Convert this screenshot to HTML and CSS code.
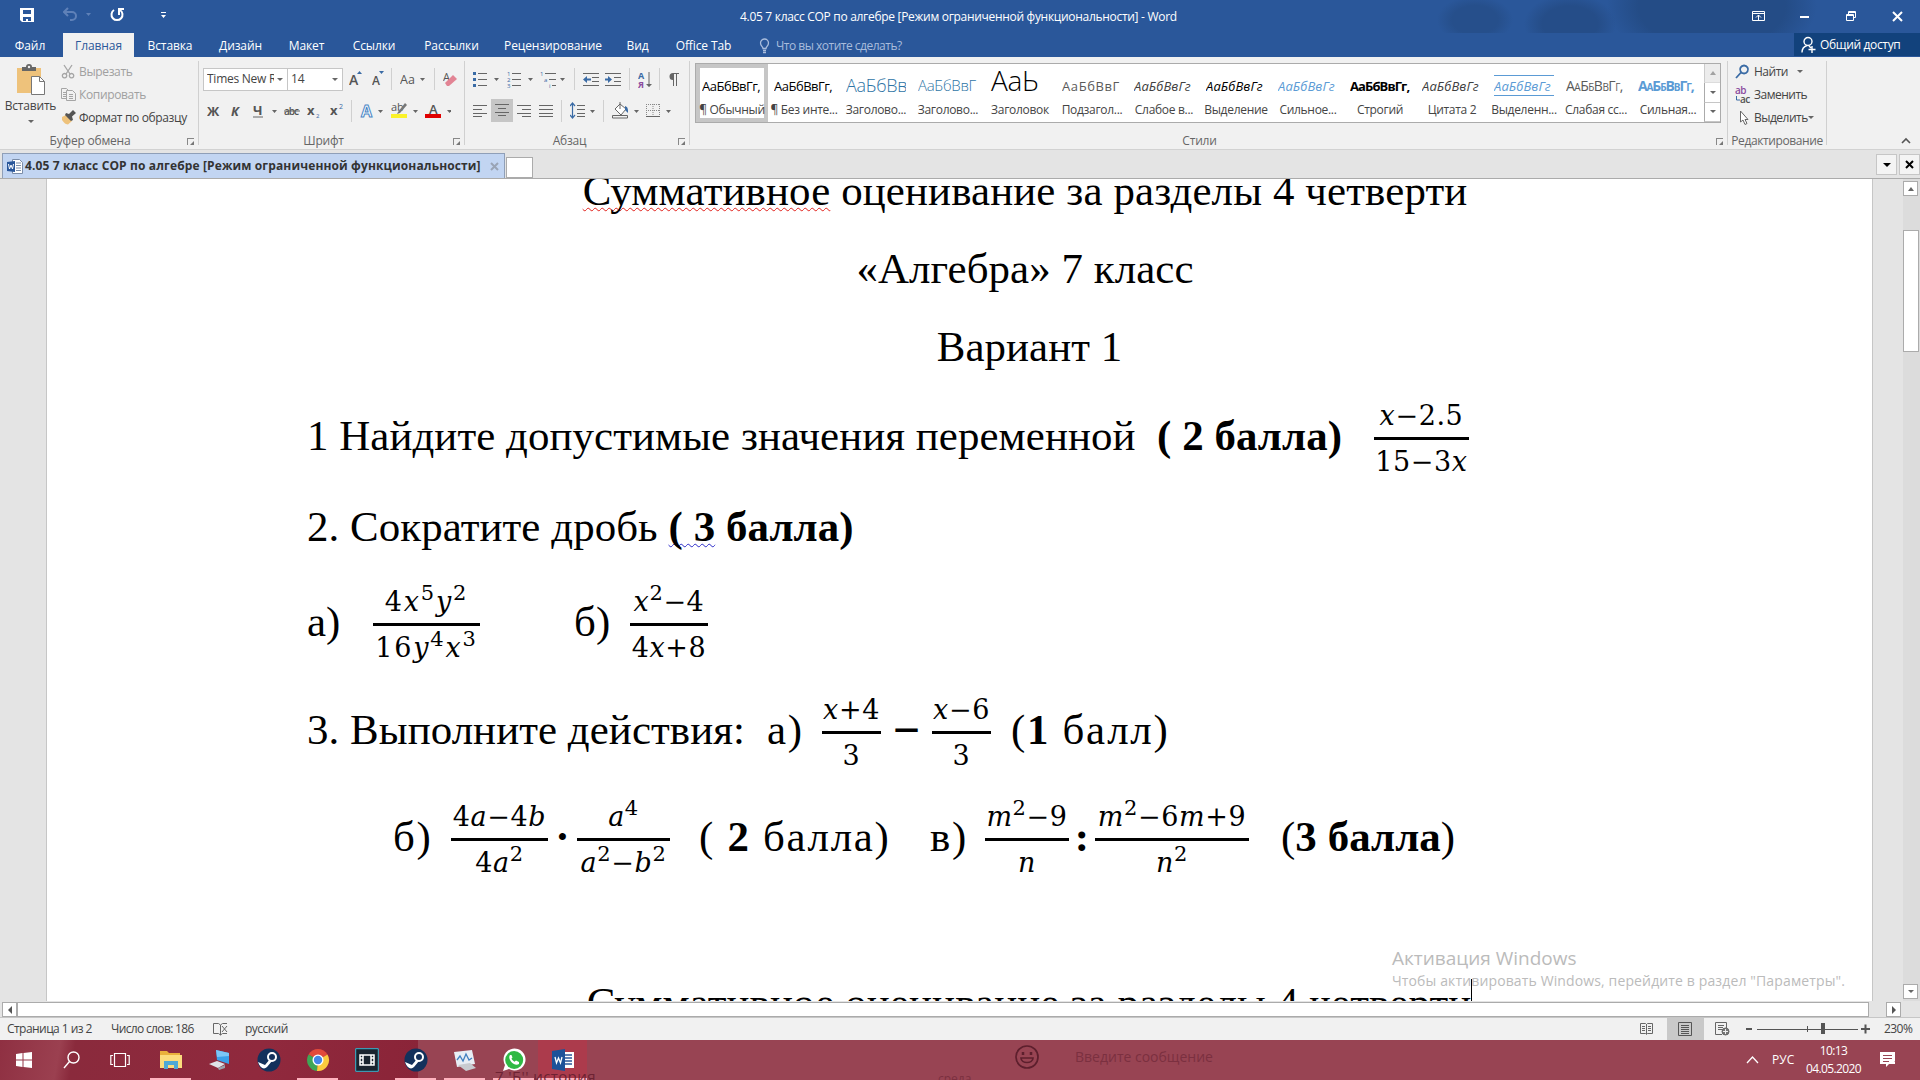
FILE: index.html
```html
<!DOCTYPE html>
<html lang="ru">
<head>
  <meta charset="UTF-8">
  <title>4.05 7 класс СОР по алгебре - Word</title>
  <link rel="stylesheet" href="styles.css">
</head>
<body>
  <!-- title bar -->
  <header class="titlebar">
    <div class="quick">
      <svg width="43" height="16" viewBox="0 0 43 16"><path d="M0 1h14v14H2l-2-2z" fill="#fff"/><path d="M3 3h8v4H3zM3 10h8v4H8v-2H6v2H3z" fill="#2a579a"/></svg>
      <svg width="47" height="16" viewBox="0 0 47 16"><path d="M5 1L1 5l4 4M1 5h8a4 4 0 0 1 0 8H7" fill="none" stroke="#5f81b8" stroke-width="2"/><path d="M23 6h5l-2.500 3z" fill="#5f81b8"/></svg>
      <svg width="50" height="16" viewBox="0 0 50 16"><path d="M4 3a5.500 5.500 0 1 0 6 0M9 8V2h5" fill="none" stroke="#fff" stroke-width="2"/></svg>
      <svg width="8" height="16" viewBox="0 0 8 16"><path d="M1 5h5v1H1zM1 8h5L3.500 11z" fill="#fff"/></svg>
    </div>
    <div class="title">4.05 7 класс СОР по алгебре [Режим ограниченной функциональности] - Word</div>
    <div class="window-buttons">
      <svg width="48" height="14" viewBox="0 0 48 14" fill="none" stroke="#fff"><path d="M.5 1.500h12v9H.5zM.5 3.500h12M6.500 10V5M4 7.500L6.500 5 9 7.500"/></svg>
      <svg width="46" height="14" viewBox="0 0 46 14"><path d="M0 6h9v2H0z" fill="#fff"/></svg>
      <svg width="46" height="14" viewBox="0 0 46 14" fill="none" stroke="#fff"><path d="M.5 4.500h7v6h-7zM.5 5.500h7M2.500 4V1.500h7v6H8M2.500 2.500h7"/></svg>
      <svg width="11" height="14" viewBox="0 0 11 14"><path d="M1 2l9 9M10 2l-9 9" stroke="#fff" stroke-width="2"/></svg>
    </div>
  </header>

  <nav class="tabs">
    <a>Файл</a>
    <a class="active">Главная</a>
    <a>Вставка</a>
    <a>Дизайн</a>
    <a>Макет</a>
    <a>Ссылки</a>
    <a>Рассылки</a>
    <a>Рецензирование</a>
    <a>Вид</a>
    <a>Office Tab</a>
    <div class="tell-me">
      <svg width="17" height="16" viewBox="0 0 17 16" fill="none" stroke="#a9bddd"><path d="M4 10.500C4 8.500 1.500 8 1.500 5a4 4 0 0 1 8 0c0 3-2.500 3.500-2.500 5.500zM4 12.500h3M4 14.500h3" stroke-width="1.300"/></svg>
      <span>Что вы хотите сделать?</span>
    </div>
    <div class="share">
      <svg width="19" height="18" viewBox="0 0 19 18" fill="none" stroke="#fff" stroke-width="1.400"><circle cx="7" cy="5.500" r="4"/><path d="M1 16.500c0-4 2-6 5-7M8 10l2 2M11 10v7M7.500 13.500h7"/></svg>
      <span>Общий доступ</span>
    </div>
  </nav>

  <!-- ribbon -->
  <section class="ribbon">
    <div class="group clipboard">
      <div class="group-body">
        <div class="paste">
          <svg width="30" height="32" viewBox="0 0 30 32"><path d="M1 4h24v25H1z" fill="#eec27b"/><path d="M6 3h4a3 3 0 0 1 6 0h4v4H6z" fill="#666"/><circle cx="13" cy="3" r="1.200" fill="#f1f1f1"/><path d="M15.500 12.500h8l5 5v13h-13z" fill="#fff" stroke="#777"/><path d="M23.500 12.500v5h5" fill="none" stroke="#777"/></svg>
          <span>Вставить</span>
          <i class="caret"></i>
        </div>
        <ul class="commands">
          <li class="disabled"><svg width="18" height="15" viewBox="0 0 18 15"><path d="M3 1l6 9M11 1L5 10" fill="none" stroke="#a5a5a5" stroke-width="1.300"/><path d="M3.500 9.500a2.200 2.200 0 1 0 .1 0zM10.500 9.500a2.200 2.200 0 1 0 .1 0z" fill="none" stroke="#a5a5a5" stroke-width="1.300"/></svg><span>Вырезать</span></li>
          <li class="disabled"><svg width="18" height="15" viewBox="0 0 18 15"><g fill="#f1f1f1" stroke="#a5a5a5"><path d="M.5 1.500h5l3 3v7h-8zM2 5.500h4M2 7.500h4M2 9.500h4"/><path d="M5.500 3.500h6l3 3v7h-9zM8 7.500h4M8 9.500h4M8 11.500h4"/></g></svg><span>Копировать</span></li>
          <li><svg width="18" height="15" viewBox="0 0 18 15"><path d="M1 7l4-2 6 6-4 3.500c-3 0-5-3-6-4.500z" fill="#eec27b"/><path d="M5 3l3 1 4-4 3 3-4 3.500 1 3.500-2 1-6-6z" fill="#555"/></svg><span>Формат по образцу</span></li>
        </ul>
      </div>
      <div class="group-label">Буфер обмена<i class="launcher"></i></div>
    </div>

    <div class="group font">
      <div class="tools">
        <div class="combo name"><span>Times New R</span><i class="caret"></i></div>
        <div class="combo size"><span>14</span><i class="caret"></i></div>
        <svg width="23" height="24" viewBox="0 0 23 24"><text x="0" y="18" font-size="14" font-weight="600">A</text><path d="M8 7h5l-2.500-3z" fill="#3a6ba5"/></svg>
        <svg width="19" height="24" viewBox="0 0 19 24"><text x="0" y="18" font-size="12" font-weight="600">A</text><path d="M7 4h5L9.500 7z" fill="#3a6ba5"/></svg>
        <i class="sep"></i>
        <svg width="34" height="24" viewBox="0 0 34 24"><text x="0" y="17" font-size="12.500">Aa</text><path d="M20 11h5l-2.500 3z"/></svg>
        <i class="sep"></i>
        <svg width="20" height="24" viewBox="0 0 20 24"><text x="0" y="14" font-size="11">A</text><path d="M2 16l8-8 4 4-8 7H4z" fill="#e28494"/></svg>
      </div>
      <div class="tools">
        <svg width="24" height="22" viewBox="0 0 24 22"><text x="0" y="16" font-size="13" font-weight="bold">Ж</text></svg>
        <svg width="22" height="22" viewBox="0 0 22 22"><text x="0" y="16" font-size="13" font-weight="bold" font-style="italic">К</text></svg>
        <svg width="31" height="22" viewBox="0 0 31 22"><text x="0" y="15" font-size="13" font-weight="bold">Ч</text><path d="M0 16.500h10v1H0zM19 10h5l-2.500 3z"/></svg>
        <svg width="23" height="22" viewBox="0 0 23 22"><text x="0" y="15" font-size="10" textLength="15" font-weight="600">abc</text><path d="M0 10.500h16v1H0z"/></svg>
        <svg width="23" height="22" viewBox="0 0 23 22"><text x="0" y="15" font-size="13" font-weight="bold">x</text><text x="9" y="18" font-size="6" class="blue">2</text></svg>
        <svg width="21" height="22" viewBox="0 0 21 22"><text x="0" y="15" font-size="13" font-weight="bold">x</text><text x="9" y="9" font-size="7" class="blue">2</text></svg>
        <i class="sep"></i>
        <svg width="31" height="22" viewBox="0 0 31 22"><text x="1" y="17" font-size="16" font-weight="bold" class="outline">A</text><path d="M18 10h5l-2.500 3z"/></svg>
        <svg width="34" height="22" viewBox="0 0 34 22"><text x="0" y="11" font-size="11">ab</text><path d="M7 12l7-9 2 2-7 8-3 1z" fill="#777"/><path d="M0 14h16v4H0z" fill="#fbf22a"/><path d="M22 10h5l-2.500 3z"/></svg>
        <svg width="26" height="22" viewBox="0 0 26 22"><text x="4" y="14" font-size="13" font-weight="600">A</text><path d="M0 14h16v4H0z" fill="#e00000"/><path d="M22 10h5l-2.500 3z"/></svg>
      </div>
      <div class="group-label">Шрифт<i class="launcher"></i></div>
    </div>

    <div class="group paragraph">
      <div class="tools">
        <svg width="34" height="24" viewBox="0 0 34 24"><path d="M5 6h9v1H5zM5 12h9v1H5zM5 18h9v1H5zM21 11h5l-2.500 3z"/><path d="M0 5h3v3H0zM0 11h3v3H0zM0 17h3v3H0z" fill="#3a6ba5"/></svg>
        <svg width="33" height="24" viewBox="0 0 33 24"><path d="M5 6h9v1H5zM5 12h9v1H5zM5 18h9v1H5zM21 11h5l-2.500 3z"/><text x="0" y="9" font-size="6" class="blue">1</text><text x="0" y="15" font-size="6" class="blue">2</text><text x="0" y="21" font-size="6" class="blue">3</text></svg>
        <svg width="34" height="24" viewBox="0 0 34 24"><path d="M5 6h11v1H5zM9 12h7v1H9zM12 18h4v1h-4zM20 11h5l-2.500 3z"/><text x="0" y="9" font-size="6" class="blue">1</text><text x="4" y="15" font-size="6" class="blue">a</text><text x="9" y="21" font-size="6" class="blue">i</text></svg>
        <i class="sep"></i>
        <svg width="22" height="24" viewBox="0 0 22 24"><path d="M0 6h16v1H0zM9 10h7v1H9zM9 14h7v1H9zM0 18h16v1H0z"/><path d="M0 12.500L4 9v2.500h4v2H4V16z" fill="#3a6ba5"/></svg>
        <svg width="24" height="24" viewBox="0 0 24 24"><path d="M0 6h16v1H0zM9 10h7v1H9zM9 14h7v1H9zM0 18h16v1H0z"/><path d="M7 12.500L3 9v2.500H0v2h3V16z" fill="#3a6ba5"/></svg>
        <i class="sep"></i>
        <svg width="21" height="24" viewBox="0 0 21 24"><text x="0" y="12" font-size="9" font-weight="bold" class="blue">А</text><text x="0" y="21" font-size="9" font-weight="bold" class="purple">Я</text><path d="M10.500 5h1v15h-1zM8 17h6l-3 3z"/></svg>
        <i class="sep"></i>
        <svg width="16" height="24" viewBox="0 0 16 24"><path d="M5 6h6v1H9v12H8V7H6v12H5v-6a3.500 3.500 0 0 1 0-7z"/></svg>
      </div>
      <div class="tools">
        <svg width="18" height="22" viewBox="0 0 18 22"><path d="M0 5h14v1H0zM0 9h9v1H0zM0 13h14v1H0zM0 16h9v1H0z"/></svg>
        <svg class="pressed" width="22" height="23" viewBox="0 0 22 23"><path d="M4 5h14v1H4zM7 9h8v1H7zM4 13h14v1H4zM7 16h8v1H7z"/></svg>
        <svg width="22" height="22" viewBox="-4 0 22 22"><path d="M0 5h14v1H0zM5 9h9v1H5zM0 13h14v1H0zM5 16h9v1H5z"/></svg>
        <svg width="26" height="22" viewBox="-4 0 26 22"><path d="M0 5h14v1H0zM0 9h14v1H0zM0 13h14v1H0zM0 16h14v1H0z"/></svg>
        <i class="sep"></i>
        <svg width="33" height="22" viewBox="0 0 33 22"><path d="M7 5h8v1H7zM7 9h8v1H7zM7 13h8v1H7zM7 16h8v1H7zM20 10h5l-2.500 3z"/><path d="M2.500 3v15M0 6l2.500-3L5 6M0 15l2.500 3L5 15" fill="none" stroke="#3a6ba5" stroke-width="1.200"/></svg>
        <i class="sep"></i>
        <svg width="34" height="22" viewBox="0 0 34 22"><path d="M3 9l5-5 6 5-5 6zM8 9V2" fill="#fff" stroke="#666"/><path d="M13 6c3 1 3 3 3 7l-3-3z" fill="#3a6ba5"/><path d="M.5 15.500h15v2.500H.5z" fill="none" stroke="#666"/><path d="M22 10h5l-2.500 3z"/></svg>
        <svg width="28" height="22" viewBox="0 0 28 22"><path d="M.5 4v13M7 4v13M13.500 4v13M0 4.500h14M0 10.500h14" fill="none" stroke="#888" stroke-dasharray="1 1"/><path d="M0 16h14v1H0zM20 10h5l-2.500 3z"/></svg>
      </div>
      <div class="group-label">Абзац<i class="launcher"></i></div>
    </div>

    <div class="group styles">
      <div class="gallery">
        <div class="style selected"><b class="s-normal">АаБбВвГг,</b><span>¶ Обычный</span></div>
        <div class="style"><b class="s-normal">АаБбВвГг,</b><span>¶ Без инте...</span></div>
        <div class="style"><b class="s-h1">АаБбВв</b><span>Заголово...</span></div>
        <div class="style"><b class="s-h2">АаБбВвГ</b><span>Заголово...</span></div>
        <div class="style"><b class="s-title">АаЬ</b><span>Заголовок</span></div>
        <div class="style"><b class="s-sub">АаБбВвГ</b><span>Подзагол...</span></div>
        <div class="style"><b class="s-em weak">АаБбВвГг</b><span>Слабое в...</span></div>
        <div class="style"><b class="s-em">АаБбВвГг</b><span>Выделение</span></div>
        <div class="style"><b class="s-em accent">АаБбВвГг</b><span>Сильное...</span></div>
        <div class="style"><b class="s-strong">АаБбВвГг,</b><span>Строгий</span></div>
        <div class="style"><b class="s-em weak">АаБбВвГг</b><span>Цитата 2</span></div>
        <div class="style"><b class="s-em accent lined">АаБбВвГг</b><span>Выделенн...</span></div>
        <div class="style"><b class="s-caps">АаБбВвГг,</b><span>Слабая сс...</span></div>
        <div class="style"><b class="s-caps accent bold">АаБбВвГг,</b><span>Сильная...</span></div>
        <div class="gallery-scroll">
          <div class="off"><i class="caret up"></i></div>
          <div><i class="caret"></i></div>
          <div><i class="caret more"></i></div>
        </div>
      </div>
      <div class="group-label">Стили<i class="launcher"></i></div>
    </div>

    <div class="group editing">
      <ul class="commands">
        <li><svg width="19" height="16" viewBox="0 0 19 16"><path d="M9 1.500a4 4 0 1 0 .1 0zM6 8.500L1 14" fill="none" stroke="#3a6ba5" stroke-width="1.800"/></svg><span>Найти</span><i class="caret"></i></li>
        <li><svg width="19" height="18" viewBox="0 0 19 18"><text x="0" y="8" font-size="10" font-weight="600" class="purple">ab</text><text x="5" y="17" font-size="10" font-weight="600">ac</text><path d="M1.500 10v4H5" fill="none" stroke="#3a6ba5"/></svg><span>Заменить</span></li>
        <li><svg width="19" height="16" viewBox="0 0 19 16"><path d="M5.500 1v11l2.500-2 2 4.500 2-1-2-4h3z" fill="#fff" stroke="#666"/></svg><span>Выделить</span><i class="caret near"></i></li>
      </ul>
      <div class="group-label">Редактирование</div>
    </div>
    <svg class="collapse" width="10" height="8" viewBox="0 0 10 8"><path d="M1 6l4-4 4 4" fill="none" stroke="#555" stroke-width="1.600"/></svg>
  </section>

  <!-- document tabs -->
  <div class="doc-tabs">
    <div class="doc-tab">
      <svg width="18" height="17" viewBox="0 0 18 17"><path d="M5.500 1.500h7l3 3v11h-10z" fill="#fff" stroke="#7b8da8"/><path d="M9 5h5M9 7.500h5M9 10h5M9 12.500h5" stroke="#7b8da8"/><path d="M0 4l8-1v11l-8-1z" fill="#2a579a"/><path d="M1.500 6l1 5 1.500-4 1.500 4 1-5" fill="none" stroke="#fff"/></svg>
      <span>4.05 7 класс СОР по алгебре [Режим ограниченной функциональности]</span>
      <svg width="9" height="9" viewBox="0 0 9 9"><path d="M1 1l7 7M8 1L1 8" stroke="#9aa4b5" stroke-width="2"/></svg>
    </div>
    <div class="new-tab"></div>
    <div class="doc-tab-buttons">
      <div><i class="caret"></i></div>
      <div><svg width="9" height="9" viewBox="0 0 9 9"><path d="M1 1l7 7M8 1L1 8" stroke="#000" stroke-width="2"/></svg></div>
    </div>
  </div>

  <!-- document -->
  <main class="workspace">
    <article class="page">
      <p class="center first"><span class="typo">Суммативное</span> оценивание за разделы 4 четверти</p>
      <p class="center">«Алгебра» 7 класс</p>
      <p class="center variant">Вариант 1</p>

      <div class="line task1">
        <span>1 Найдите допустимые значения переменной</span>
        <span><b>( 2 балла)</b></span>
        <div class="frac"><span><i>x</i>−2.5</span><span>15−3<i>x</i></span></div>
      </div>
      <div class="line task2">
        <span>2. Сократите дробь <b><u class="grammar">( 3</u> балла)</b></span>
      </div>
      <div class="line task2-items">
        <span>а)</span>
        <div class="frac loose"><span>4<i>x</i><sup>5</sup><i>y</i><sup>2</sup></span><span>16<i>y</i><sup>4</sup><i>x</i><sup>3</sup></span></div>
        <span class="item-b">б)</span>
        <div class="frac"><span><i>x</i><sup>2</sup>−4</span><span>4<i>x</i>+8</span></div>
      </div>
      <div class="line task3">
        <span>3. Выполните действия:</span>
        <span class="math">а)</span>
        <div class="frac"><span><i>x</i>+4</span><span>3</span></div>
        <span class="op minus">−</span>
        <div class="frac"><span><i>x</i>−6</span><span>3</span></div>
        <span class="math points-a">(<b>1</b> балл)</span>
      </div>
      <div class="line task3-more">
        <span class="math">б)</span>
        <div class="frac"><span>4<i>a</i>−4<i>b</i></span><span>4<i>a</i><sup>2</sup></span></div>
        <span class="op">·</span>
        <div class="frac"><span><i>a</i><sup>4</sup></span><span><i>a</i><sup>2</sup>−<i>b</i><sup>2</sup></span></div>
        <span class="math points-b">( <b>2</b> балла)</span>
        <span class="math">в)</span>
        <div class="frac"><span><i>m</i><sup>2</sup>−9</span><span><i>n</i></span></div>
        <span class="op">:</span>
        <div class="frac"><span><i>m</i><sup>2</sup>−6<i>m</i>+9</span><span><i>n</i><sup>2</sup></span></div>
        <span class="points-c">(<b>3 балла</b>)</span>
      </div>
      <p class="center second">Суммативное оценивание за разделы 4 четверти<i class="cursor"></i></p>
      <div class="watermark">
        <div>Активация Windows</div>
        <small>Чтобы активировать Windows, перейдите в раздел "Параметры".</small>
      </div>
    </article>
    <div class="vscroll">
      <div class="scroll-button"><i class="caret up"></i></div>
      <div class="thumb"></div>
      <div class="scroll-button last"><i class="caret"></i></div>
    </div>
  </main>

  <div class="hscroll">
    <div class="scroll-button"><i class="caret left"></i></div>
    <div class="track"></div>
    <div class="scroll-button"><i class="caret right"></i></div>
  </div>

  <footer class="status">
    <span class="pages">Страница 1 из 2</span>
    <span class="words">Число слов: 186</span>
    <svg width="32" height="14" viewBox="0 0 32 14" fill="none" stroke="#666"><path d="M.5 1.500h5l2 1.500v10l-2-1.500h-5zM7.500 3l2-1.500h4.500M7.500 13l2-1.500h4.500M9 4l5 6M14 4l-5 6"/></svg>
    <span class="language">русский</span>
    <div class="views">
      <svg width="27" height="14" viewBox="0 0 27 14" fill="none" stroke="#666"><path d="M.5 1.500h5l1 1 1-1h5v10h-5l-1 1-1-1h-5zM6.500 2v10M2 4.500h3M2 6.500h3M2 8.500h3M8 4.500h3M8 6.500h3M8 8.500h3"/></svg>
      <div class="view-active"><svg width="15" height="14" viewBox="0 0 15 14" fill="none" stroke="#555"><path d="M.5.5h13v13H.5zM3 3.500h8M3 5.500h8M3 7.500h8M3 9.500h8M3 11.500h8"/></svg></div>
      <svg width="31" height="14" viewBox="0 0 31 14" fill="none" stroke="#666"><path d="M7 12.500H.5V.5h11V6M3 3.500h6M3 5.500h5M3 7.500h4"/><circle cx="10.500" cy="9.500" r="3.500" fill="#777"/><path d="M8 9.500h5M10.500 7v5" stroke="#eee"/></svg>
      <svg width="138" height="14" viewBox="0 0 138 14" fill="#555"><path d="M0 6h6v2H0zM11 7h101v1H11zM61 4h1v6h-1zM75 1h4v11h-4zM115 6h9v2h-9zM118.500 2.500h2v9h-2z"/></svg>
      <span>230%</span>
    </div>
  </footer>

  <!-- Windows taskbar -->
  <div class="taskbar">
    <div class="apps">
      <div class="app sys"><svg width="16" height="16" viewBox="0 0 16 16" fill="#fff"><path d="M0 2l6.500-1v6.500H0zM7.500 1L16 0v7.500H7.500zM0 8.500h6.500V15L0 14zM7.500 8.500H16V16l-8.500-1z"/></svg></div>
      <div class="app sys"><svg width="18" height="18" viewBox="0 0 18 18" fill="none" stroke="#fff" stroke-width="1.400"><circle cx="10.500" cy="6.500" r="5.500"/><path d="M6.500 10.500L1 17"/></svg></div>
      <div class="app sys"><svg width="20" height="16" viewBox="0 0 20 16" fill="none" stroke="#fff" stroke-width="1.200"><path d="M4.500 1.500h11v13h-11zM3 3.500H.8v9H3M17 3.500h2.200v9H17"/></svg></div>
      <div class="app open"><svg width="22" height="20" viewBox="0 0 22 20"><path d="M0 1h7l2 2h11v6H0z" fill="#e9b03c"/><path d="M0 5h22v13H0z" fill="#fbdc7d"/><path d="M4 11h14v8h-4v-4H8v4H4z" fill="#4fa8d5"/></svg></div>
      <div class="app"><svg width="24" height="22" viewBox="0 0 24 22"><path d="M8 1l13 3v11L9 11z" fill="#3aa0ea"/><path d="M8 1l13 3v3L9 8z" fill="#7cc6f7"/><path d="M1 15l8-3 8 3-7 4z" fill="#dfe3e8"/><path d="M10 19l7-3v3l-6 2z" fill="#9ba3ad"/></svg></div>
      <div class="app"><svg width="24" height="24" viewBox="0 0 24 24"><circle cx="12" cy="12" r="11.500" fill="#13315c"/><path d="M1 14l7 3 5-6 2 2-5 6c-3 3-7 1-9-5z" fill="#fff"/><circle cx="15" cy="9" r="4" fill="#13315c" stroke="#fff" stroke-width="2"/></svg></div>
      <div class="app open"><svg width="24" height="24" viewBox="0 0 24 24"><path d="M12 12L2.500 6.500a11 11 0 0 1 19 0z" fill="#e24a3b"/><path d="M12 12L2.500 6.500A11 11 0 0 0 11 23z" fill="#3fa655"/><path d="M12 12l9.500-5.500A11 11 0 0 1 11 23z" fill="#fbca3e"/><circle cx="12" cy="12" r="5.500" fill="#fff"/><circle cx="12" cy="12" r="4.200" fill="#4486e8"/></svg></div>
      <div class="app"><svg width="24" height="24" viewBox="0 0 24 24"><path d="M.7.7h22.600v22.600H.7z" fill="#1a2530" stroke="#35b4d0"/><path d="M5 7h14v10H5zM8 7v10M16 7v10M5 10h3M5 14h3M16 10h3M16 14h3" fill="none" stroke="#fff" stroke-width="1.500"/></svg></div>
      <div class="app open"><svg width="24" height="24" viewBox="0 0 24 24"><circle cx="12" cy="12" r="11.500" fill="#13315c"/><path d="M1 14l7 3 5-6 2 2-5 6c-3 3-7 1-9-5z" fill="#fff"/><circle cx="15" cy="9" r="4" fill="#13315c" stroke="#fff" stroke-width="2"/></svg></div>
      <div class="app open"><svg width="24" height="24" viewBox="0 0 24 24"><path d="M1 4l18-2 3 14-18 3z" fill="#e8eef5"/><path d="M4 12l3-4 3 5 3-7 3 6 3-2" fill="none" stroke="#4180c0" stroke-width="1.300"/><path d="M5 17l12-2 6 5-10 3z" fill="#c8cbd0"/></svg></div>
      <div class="app open"><svg width="24" height="24" viewBox="0 0 24 24"><path d="M1 23l2-6A11 11 0 1 1 7 21z" fill="#fff"/><circle cx="12.200" cy="12" r="9" fill="#2fb944"/><path d="M8 7c-3 4 4 12 9 9l0-2-3-1.500-1.500 1.200c-1.500-.7-2.500-2-3-3.200L10.500 9.500 9.500 7z" fill="#fff"/></svg></div>
      <div class="app open current"><svg width="24" height="22" viewBox="0 0 24 22"><path d="M12 3h11v16H12z" fill="#fff"/><path d="M14 6h7M14 9h7M14 12h7M14 15h7" stroke="#2a579a" stroke-width="1.300"/><path d="M1 2l13-2v22L1 20z" fill="#1d5299"/><path d="M4 8l1.500 6L7.500 9l2 5L11 8" fill="none" stroke="#fff" stroke-width="1.300"/></svg></div>
    </div>
    <div class="behind">
      <span class="history">7 'Б'' история</span>
      <span class="day">среда</span>
      <svg width="24" height="24" viewBox="0 0 24 24" fill="none" stroke="#5d1f2d" stroke-width="1.700"><circle cx="12" cy="12" r="11"/><path d="M6 13h12c0 6-12 6-12 0z"/><path d="M8 7v3M16 7v3" stroke-width="2.500"/></svg>
      <span class="message">Введите сообщение</span>
    </div>
    <div class="tray">
      <svg width="26" height="10" viewBox="0 0 26 10"><path d="M1 8l5.500-6L12 8" fill="none" stroke="#fff" stroke-width="1.300"/></svg>
      <span class="lang">РУС</span>
      <div class="clock"><span>10:13</span><span>04.05.2020</span></div>
      <svg width="18" height="18" viewBox="0 0 18 18"><path d="M0 1h15v12h-6l-3 3v-3H0z" fill="#fff"/><path d="M3 4.500h9M3 7.500h9M3 10.500h6" stroke="#984453"/><path d="M10 16a4 4 0 0 0 5-6 4 4 0 0 1-5 6z" fill="#fff" stroke="#984453" stroke-width=".6"/></svg>
    </div>
  </div>
</body>
</html>
```

FILE: styles.css
```css
* {
  box-sizing: border-box;
}

body {
  margin: 0;
  width: 1920px;
  height: 1080px;
  overflow: hidden;
  display: flex;
  flex-direction: column;
  background-color: #e4e4e4;
  color: #444;
  font-family: "Open Sans", "Noto Sans", sans-serif;
  font-size: 12px;
  line-height: 16px;
  white-space: nowrap;
}

svg {
  display: block;
  flex: none;
}

ul {
  margin: 0;
  padding: 0;
  list-style: none;
}

.caret {
  display: inline-block;
  flex: none;
  border: 3px solid transparent;
  border-top-color: #666;
  border-bottom: 0;
}

.caret.up {
  border: 3px solid transparent;
  border-bottom: 4px solid #666;
  border-top: 0;
}

.caret.left {
  border: 4px solid transparent;
  border-right-color: #555;
  border-left: 0;
}

.caret.right {
  border: 4px solid transparent;
  border-left-color: #555;
  border-right: 0;
}

/* title bar */

.titlebar {
  height: 33px;
  flex: none;
  display: flex;
  align-items: center;
  color: #fff;
  background-color: #2a579a;
  background-image:
    radial-gradient(ellipse 38px 24px at 1475px 20px, #264f8b 60%, transparent),
    radial-gradient(ellipse 46px 30px at 1570px 24px, #254d88 60%, transparent),
    radial-gradient(ellipse 105px 60px at 1712px 6px, #244c86 70%, transparent);
}

.quick {
  width: 740px;
  display: flex;
  align-items: center;
  padding: 0 0 3px 20px;
}

.title {
  width: 1012px;
  letter-spacing: -0.3px;
}

.window-buttons {
  display: flex;
}

.tabs {
  height: 24px;
  flex: none;
  display: grid;
  grid-template-columns: 60px 74px 72px 69px 63px 72px 83px 120px 49px 83px 1fr 126px;
  background-color: #2a579a;
  color: #fff;
  text-align: center;
  line-height: 25px;
  letter-spacing: -0.1px;
}

.tabs .active {
  margin-left: 3px;
  background-color: #f1f1f1;
  color: #2a579a;
}

.tell-me {
  display: flex;
  align-items: center;
  padding-left: 14px;
  color: #a9bddd;
  letter-spacing: -0.5px;
}

.share {
  display: flex;
  align-items: center;
  padding-left: 7px;
  height: 23px;
  background-color: #12427c;
  letter-spacing: -0.35px;
}

/* ribbon */

.ribbon {
  height: 93px;
  flex: none;
  display: flex;
  background-color: #f1f1f1;
  border-bottom: 1px solid #d2d2d2;
}

.ribbon svg {
  fill: #666;
}

.ribbon text {
  fill: #555;
}

.ribbon .blue {
  fill: #3a6ba5;
}

.ribbon .purple {
  fill: #8a4b9e;
}

.ribbon .outline {
  fill: #fff;
  stroke: #4a86c5;
}

.group {
  position: relative;
  margin: 4px 0;
  padding-top: 2px;
  border-right: 1px solid #d0d0d0;
  display: flex;
  flex-direction: column;
}

.clipboard { width: 199px; }
.font { width: 266px; padding-left: 4px; }
.paragraph { width: 225px; padding-left: 8px; }
.styles { width: 1038px; padding-left: 5px; }
.editing { width: 99px; padding-left: 7px; }

.group-label {
  margin-top: auto;
  margin-bottom: -4px;
  text-align: center;
  padding-right: 20px;
  color: #666;
  letter-spacing: -0.2px;
}

.clipboard .group-label {
  padding-right: 18px;
}

.paragraph .group-label,
.styles .group-label {
  padding-right: 23px;
}

.editing .group-label {
  padding: 0;
  margin-left: -7px;
  letter-spacing: -0.4px;
}

/* small corner mark that opens the dialog */
.launcher {
  position: absolute;
  right: 4px;
  bottom: 0;
  width: 7px;
  height: 7px;
  border: 1px solid #888;
  border-right: 0;
  border-bottom: 0;
}

.launcher::after {
  content: "";
  position: absolute;
  right: 0;
  bottom: 0;
  border: 2px solid #777;
  border-top-color: transparent;
  border-left-color: transparent;
}

.group-body {
  display: flex;
}

.paste {
  width: 61px;
  display: flex;
  flex-direction: column;
  align-items: center;
  padding-top: 1px;
}

.paste span {
  margin-top: 2px;
  letter-spacing: -0.2px;
}

.paste .caret {
  margin-top: 6px;
}

.commands {
  margin-top: -3px;
  letter-spacing: -0.35px;
}

.commands li {
  display: flex;
  align-items: center;
  height: 23px;
}

.commands .disabled {
  color: #a0a0a0;
}

.commands .caret {
  margin-left: 9px;
}

.commands .caret.near {
  margin-left: 0;
}

.editing .commands {
  letter-spacing: -0.5px;
}

.tools {
  display: flex;
  align-items: center;
  height: 32px;
}

.tools + .tools {
  height: 31px;
}

.font .tools + .tools {
  padding-left: 4px;
}

.sep {
  width: 1px;
  height: 22px;
  background-color: #d0d0d0;
  margin-right: 8px;
}

.combo {
  display: flex;
  align-items: center;
  height: 23px;
  background-color: #fff;
  border: 1px solid #c6c6c6;
  padding: 0 4px 0 3px;
}

.combo span {
  flex: 1;
  overflow: hidden;
  margin-right: 3px;
}

.combo.name { width: 85px; letter-spacing: -0.25px; }
.combo.size { width: 56px; margin-left: -1px; margin-right: 6px; }

.pressed {
  background-color: #c6c6c6;
}

.gallery {
  height: 60px;
  width: 1026px;
  display: flex;
  background-color: #fff;
  border: 1px solid #ababab;
}

.style {
  width: 72px;
  flex: none;
  display: flex;
  flex-direction: column;
  align-items: center;
  letter-spacing: -0.3px;
}

.style.selected {
  box-shadow: inset 0 0 0 4px #c6c6c6;
}

.style b {
  width: 60px;
  height: 38px;
  line-height: 44px;
  overflow: hidden;
  font-weight: normal;
  font-size: 13px;
  color: #000;
}

.style .s-normal { letter-spacing: -0.5px; }
.style .s-h1 { font-size: 18px; color: #2e74a5; font-weight: 300; line-height: 42px; }
.style .s-h2 { font-size: 15px; color: #2e74a5; font-weight: 300; line-height: 43px; }
.style .s-title { font-size: 28px; font-weight: 300; line-height: 33px; padding-left: 1px; }
.style .s-sub { color: #5a5a5a; letter-spacing: 0.6px; }
.style .s-em { font-style: italic; letter-spacing: 0.1px; }
.style .s-strong { font-weight: bold; letter-spacing: -0.9px; }
.style .s-caps { color: #5a5a5a; font-variant: small-caps; font-size: 14px; letter-spacing: -0.5px; }
.style .weak { color: #404040; }
.style .accent { color: #5b9bd5; }
.style .bold { font-weight: bold; letter-spacing: -1.1px; }

.style .lined {
  height: 21px;
  line-height: 21px;
  margin: 11px 0 6px;
  border-top: 1px solid #5b9bd5;
  border-bottom: 1px solid #5b9bd5;
}

.gallery-scroll {
  flex: 1;
  display: flex;
  flex-direction: column;
}

.gallery-scroll div {
  flex: 1;
  display: flex;
  align-items: center;
  justify-content: center;
  border-left: 1px solid #ababab;
  border-bottom: 1px solid #c6c6c6;
}

.gallery-scroll .off {
  background-color: #e1e1e1;
  opacity: 0.6;
}

.gallery-scroll .more {
  box-shadow: 0 -3px 0 -2px #666;
}

.collapse {
  margin: 80px 0 0 74px;
}

/* document tabs */

.doc-tabs {
  height: 29px;
  flex: none;
  display: flex;
  align-items: flex-end;
  padding-left: 2px;
  border-bottom: 1px solid #ababab;
}

.doc-tab {
  width: 503px;
  height: 25px;
  display: flex;
  align-items: center;
  padding-left: 4px;
  background-color: #c2d5f2;
  border: 1px solid #8f9fb8;
  border-bottom: 0;
  color: #333;
  font-weight: bold;
}

.doc-tab span {
  width: 465px;
  letter-spacing: 0.13px;
}

.new-tab {
  width: 27px;
  height: 21px;
  margin-left: 1px;
  background-color: #fff;
  border: 1px solid #ababab;
}

.doc-tab-buttons {
  margin: 0 0 3px auto;
  display: flex;
  gap: 2px;
}

.doc-tab-buttons div {
  width: 21px;
  height: 21px;
  display: flex;
  align-items: center;
  justify-content: center;
  background-color: #f4f4f4;
  border: 1px solid #c6c6c6;
}

.doc-tab-buttons .caret {
  border-width: 4px;
  border-bottom: 0;
  border-top-color: #000;
}

/* document */

.workspace {
  height: 822px;
  flex: none;
  display: flex;
  justify-content: space-between;
  padding-left: 46px;
}

.page {
  position: relative;
  width: 1827px;
  overflow: hidden;
  padding: 0 130px 0 260px;
  background-color: #fff;
  border: 1px solid #c6c6c6;
  border-width: 0 1px;
  color: #000;
  font-family: "Liberation Serif", serif;
  font-size: 42.9px;
  line-height: 78px;
  letter-spacing: 0.07px;
}

.page p {
  margin: 0;
}

.page .first {
  margin-top: -27px;
  letter-spacing: 0.13px;
}

.center {
  text-align: center;
  padding-left: 1px;
}

.variant {
  padding-left: 10px;
}

.page .second {
  padding-left: 9px;
  margin-top: 76px;
  letter-spacing: 0.13px;
}

.typo {
  text-decoration: underline wavy #e0201b 1px;
  text-underline-offset: 2px;
  text-decoration-skip-ink: none;
}

.grammar {
  text-decoration: underline wavy #2a2ac8 1px;
  text-underline-offset: 2px;
  text-decoration-skip-ink: none;
}

.line {
  display: grid;
  align-items: center;
}

.task1 {
  height: 99px;
  grid-template-columns: 850px 217px 95px;
}

.task2 {
  height: 84px;
}

.task2-items {
  height: 105px;
  grid-template-columns: 66px 107px 150px 78px;
}

.item-b {
  padding-left: 94px;
}

.task3 {
  height: 111px;
  grid-template-columns: 460px 55px 59px 51px 59px auto;
}

.task3-more {
  height: 103px;
  margin-bottom: 2px;
  padding-left: 86px;
  grid-template-columns: 58px 97px 29px 93px 260px 55px 84px 26px 154px auto;
}

.math {
  letter-spacing: 1.700px;
}

.points-a { padding-left: 20px; }
.points-b { padding-left: 29px; }
.points-c { padding-left: 32px; }

.frac {
  margin-top: 5px;
  display: grid;
  grid-template-rows: 39px 36px;
  text-align: center;
  font-family: "DejaVu Serif", serif;
  font-size: 27px;
  line-height: 30px;
  letter-spacing: 0.6px;
}

.frac.loose {
  letter-spacing: 1.800px;
}

.frac span:first-child {
  border-bottom: 3px solid #000;
}

.frac span:last-child {
  padding-top: 7px;
}

.frac sup {
  font-size: 21px;
  line-height: 0;
  vertical-align: 11px;
}

.op {
  text-align: center;
  font-weight: bold;
}

.op.minus {
  font-size: 48px;
}

.cursor {
  display: inline-block;
  width: 1px;
  height: 46px;
  margin-right: -1px;
  vertical-align: -8px;
  background-color: #000;
}

/* lies over the page */
.watermark {
  position: absolute;
  left: 1345px;
  top: 766px;
  color: #bbb;
  font-family: "Open Sans", sans-serif;
  font-size: 19px;
  line-height: 26px;
  letter-spacing: 0;
}

.watermark small {
  display: block;
  font-size: 14px;
  line-height: 20px;
  letter-spacing: 0.13px;
}

.vscroll {
  width: 17px;
  display: flex;
  flex-direction: column;
  padding: 2px 1px 2px 0;
  background-color: #dcdcdc;
}

.scroll-button {
  width: 15px;
  height: 15px;
  display: flex;
  align-items: center;
  justify-content: center;
  background-color: #fff;
  border: 1px solid #ababab;
}

.vscroll .thumb {
  height: 122px;
  margin-top: 34px;
  background-color: #fff;
  border: 1px solid #ababab;
}

.vscroll .last {
  margin-top: auto;
}

.hscroll {
  height: 17px;
  flex: none;
  display: flex;
  padding: 1px 0 0 2px;
  border-bottom: 1px solid #c6c6c6;
}

.hscroll .track {
  width: 1852px;
  height: 15px;
  margin-right: 17px;
  background-color: #fff;
  border: 1px solid #ababab;
}

/* status bar */

.status {
  height: 22px;
  flex: none;
  display: flex;
  align-items: center;
  padding-left: 7px;
  background-color: #f1f1f1;
  letter-spacing: -0.55px;
}

.pages { width: 104px; }
.words { width: 102px; letter-spacing: -0.65px; }
.language { letter-spacing: -0.5px; }

.views {
  width: 280px;
  margin-left: auto;
  display: flex;
  align-items: center;
}

.view-active {
  width: 37px;
  height: 22px;
  margin-right: 11px;
  padding: 4px 11px;
  background-color: #c9c9c9;
}

/* taskbar */

.taskbar {
  height: 40px;
  flex: none;
  display: flex;
  overflow: hidden;
  color: #fff;
  background: linear-gradient(100deg, #8f3042 0, #9b4050 60px, #8a2a3c 75px, #90293d 260px, #8a2438 100%) 0 0 / 418px 40px no-repeat #984453;
}

.apps {
  display: flex;
}

.app {
  width: 49px;
  height: 40px;
  display: flex;
  align-items: center;
  justify-content: center;
  border: 4px solid transparent;
  border-width: 0 4px;
}

.app.sys {
  width: 48px;
}

.app:nth-child(4) {
  margin-left: 2px;
}

.open {
  background: linear-gradient(#ffb3bf, #ffb3bf) bottom / 100% 2px no-repeat padding-box;
}

.current {
  border: 0;
  background-color: #ac3b4c;
}

.behind {
  flex: 1;
  display: flex;
  align-items: center;
  color: #7b3040;
}

.history {
  width: 443px;
  margin-left: -92px;
  margin-top: 31px;
  font-size: 15px;
  letter-spacing: 0.4px;
  color: #6d2333;
}

.day {
  width: 77px;
  margin-top: 38px;
}

.behind svg {
  margin-top: -6px;
}

.message {
  margin: -6px 0 0 36px;
  font-size: 14px;
}

.tray {
  display: flex;
  align-items: center;
  width: 174px;
}

.lang {
  width: 35px;
}

.clock {
  width: 73px;
  padding-right: 20px;
  display: flex;
  flex-direction: column;
  align-items: center;
  line-height: 18px;
  letter-spacing: -0.6px;
}
```
